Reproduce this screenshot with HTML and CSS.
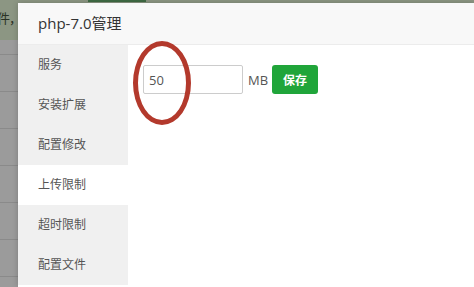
FILE: index.html
```html
<!DOCTYPE html>
<html lang="zh-CN">
<head>
    <meta charset="UTF-8">
    <meta name="viewport" content="width=device-width, initial-scale=1.0">
    <title>php-7.0管理</title>
    <link rel="stylesheet" href="styles.css">
</head>
<body>

    <!-- Seite hinter dem Dialog (abgedunkelt) -->
    <div class="page">
        <div class="page-top">
            <span class="page-text">件，</span>
            <span class="page-tab"></span>
        </div>
        <div class="page-row first"></div>
        <div class="page-row"></div>
        <div class="page-row"></div>
        <div class="page-row"></div>
        <div class="page-row"></div>
        <div class="page-row"></div>
        <div class="page-row"></div>
    </div>

    <div class="modal">
        <div class="modal-title">php-7.0管理</div>
        <div class="modal-body">
            <ul class="side-menu">
                <li>服务</li>
                <li>安装扩展</li>
                <li>配置修改</li>
                <li class="active">上传限制</li>
                <li>超时限制</li>
                <li>配置文件</li>
            </ul>
            <div class="content">
                <div class="upload-form">
                    <input type="text" class="size-input" value="50">
                    <span class="unit">MB</span>
                    <button type="button" class="btn-save">保存</button>
                </div>
                <span class="mark"></span>
            </div>
        </div>
    </div>

</body>
</html>
```

FILE: styles.css
```css
body {
    margin: 0;
    width: 474px;
    height: 287px;
    overflow: hidden;
    position: relative;
    font-family: "Open Sans", "Noto Sans CJK SC", sans-serif;
    background-color: #9b9b9b;
}

.page {
    height: 287px;
    overflow: hidden;
}

.page-top {
    height: 40px;
    background-color: #8c9683;
    position: relative;
    overflow: hidden;
}

.page-text {
    display: block;
    margin-left: -3px;
    padding-top: 8px;
    font-size: 13px;
    letter-spacing: -1px;
    color: #2a3326;
}

.page-tab {
    position: absolute;
    left: 88px;
    top: 0;
    width: 58px;
    height: 2px;
    background-color: #3f6b44;
}

.page-row {
    height: 36px;
    border-bottom: 1px solid #8a8a8a;
}

.page-row.first {
    height: 14px;
}

.modal {
    position: absolute;
    left: 18px;
    top: 3px;
    width: 456px;
    height: 284px;
    overflow: hidden;
    background-color: #fff;
    box-shadow: 0 0 6px rgba(0, 0, 0, 0.2);
}

.modal-title {
    height: 41px;
    line-height: 41px;
    padding-left: 20px;
    font-size: 15px;
    color: #333;
    background-color: #f8f8f8;
    border-bottom: 1px solid #ececec;
}

.modal-body {
    display: flex;
}

.side-menu {
    list-style: none;
    margin: 0;
    padding: 0;
    width: 110px;
    background-color: #f0f0f0;
}

.side-menu li {
    height: 40px;
    line-height: 40px;
    padding-left: 20px;
    font-size: 12px;
    color: #555;
}

.side-menu li.active {
    background-color: #fff;
}

.content {
    flex: 1;
    position: relative;
    padding: 20px 15px;
}

.upload-form {
    display: flex;
    align-items: center;
}

.size-input {
    box-sizing: border-box;
    width: 100px;
    height: 29px;
    margin: 0;
    padding: 0 5px;
    border: 1px solid #ccc;
    border-radius: 2px;
    font-family: "Open Sans", sans-serif;
    font-size: 13px;
    color: #555;
}

.unit {
    margin-left: 5px;
    font-size: 13px;
    color: #555;
}

.btn-save {
    margin-left: 4px;
    width: 46px;
    height: 29px;
    border: none;
    border-radius: 3px;
    background-color: #20a53a;
    color: #fff;
    font-family: "Noto Sans CJK SC", sans-serif;
    font-size: 12px;
    font-weight: bold;
}

/* roter Kreis um das Eingabefeld */
.mark {
    position: absolute;
    left: 5px;
    top: -4px;
    width: 48px;
    height: 74px;
    border: 5px solid #b3392c;
    border-radius: 50%;
}
```
